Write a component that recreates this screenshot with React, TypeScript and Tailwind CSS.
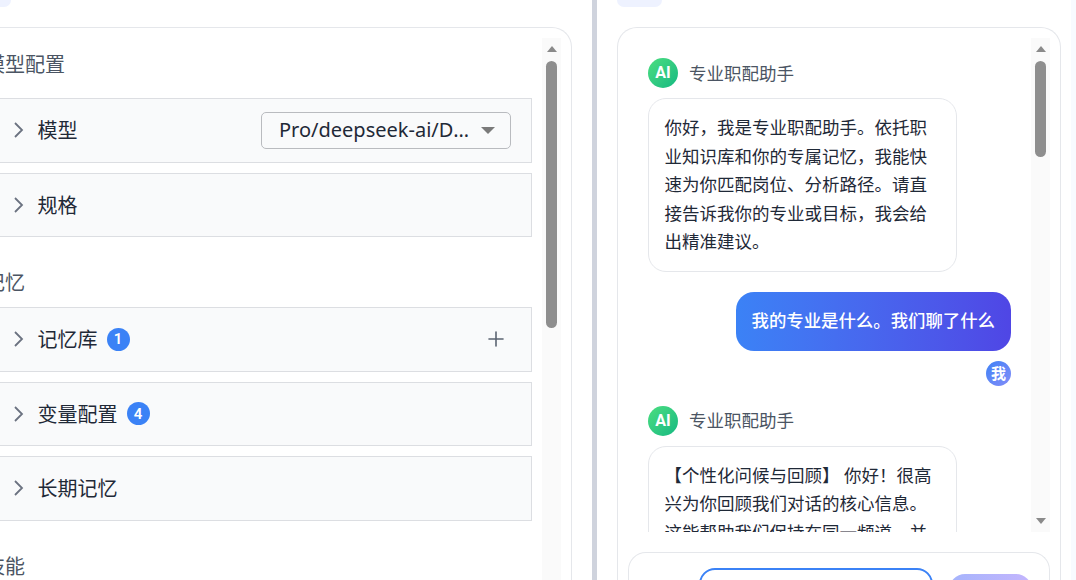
import { Plus } from 'lucide-react'

function Chevron() {
  return (
    <svg className="w-[10px] h-[16px] text-[#6b7280] shrink-0" viewBox="0 0 10 16" fill="none" stroke="currentColor" strokeWidth={1.8}>
      <path d="M1 1 L8 8 L1 15" />
    </svg>
  )
}

function Badge({ n }: { n: number }) {
  return (
    <span className="ml-[9px] w-[23px] h-[23px] rounded-full bg-[#3b82f6] text-white text-[15px] font-semibold font-['Roboto',sans-serif] flex items-center justify-center">
      {n}
    </span>
  )
}

function Row({ label, badge, children }: { label: string; badge?: number; children?: React.ReactNode }) {
  return (
    <div className="h-[64.5px] flex items-center pl-[28px] pr-[20px] bg-[#f9fafb] border border-[#dcdee2]">
      <Chevron />
      <span className="ml-[13.5px] pt-[2px] text-[20px] text-[#1f2937]">{label}</span>
      {badge ? <Badge n={badge} /> : null}
      <div className="ml-auto flex items-center">{children}</div>
    </div>
  )
}

function Scrollbar({ thumb, showDown }: { thumb: string; showDown?: boolean }) {
  return (
    <div className="w-[19px] shrink-0 bg-[#fafafa] flex flex-col items-center relative">
      <div className="mt-[8px] w-0 h-0 border-x-[5px] border-x-transparent border-b-[6px] border-b-[#8a8a8a]" />
      <div className={`mt-[9px] w-[11px] rounded-full bg-[#8e8e8e] ${thumb}`} />
      {showDown ? (
        <div className="absolute bottom-[8px] w-0 h-0 border-x-[5px] border-x-transparent border-t-[6px] border-t-[#8a8a8a]" />
      ) : null}
    </div>
  )
}

function AiHeader() {
  return (
    <div className="flex items-center gap-[11px]">
      <div className="w-[30px] h-[30px] rounded-full bg-gradient-to-br from-[#4ade80] to-[#10b981] text-white text-[16px] font-bold font-['Roboto',sans-serif] flex items-center justify-center">
        AI
      </div>
      <span className="text-[17.5px] text-[#4b5563]">专业职配助手</span>
    </div>
  )
}

function AiBubble({ text }: { text: string }) {
  return (
    <div className="mt-[10px] w-[309px] bg-white border border-[#e5e7eb] rounded-[18px] pl-[15.5px] pr-[14.5px] pt-[14px] pb-[15px] text-[17.5px] leading-[28.5px] text-[#1f2937]">
      {text}
    </div>
  )
}

export default function App() {
  return (
    <div className="w-[1076px] h-[580px] overflow-hidden flex bg-white font-['Noto_Sans','Noto_Sans_CJK_SC',sans-serif]">
      {/* Left: config */}
      <div className="-ml-[40px] w-[632px] shrink-0 pr-[20px] flex flex-col">
        <div className="ml-[20px] w-[31px] h-[7px] rounded-b-[8px] bg-[#eef2ff] shrink-0" />
        <div className="mt-[20px] flex-1 min-h-0 flex rounded-t-[20px] border border-b-0 border-[#e5e7eb] pt-[10px] pl-[24px] pr-[10px] overflow-hidden">
          <div className="flex-1 min-w-0 pr-[10px] flex flex-col">
            <div className="mt-[12px] text-[20px] leading-[30px] text-[#4b5563]">模型配置</div>
            <div className="mt-[18px] flex flex-col gap-[10px]">
              <Row label="模型">
                <div className="w-[250px] h-[37px] flex items-center pl-[17px] pr-[15px] gap-[10px] bg-[#f9fafb] border border-[#b9bbbf] rounded-[5px]">
                  <span className="flex-1 min-w-0 truncate text-[20px] text-[#1f2937]">Pro/deepseek-ai/DeepSeek-V3</span>
                  <span className="w-0 h-0 border-x-[7px] border-x-transparent border-t-[7px] border-t-[#7a7a7a]" />
                </div>
              </Row>
              <Row label="规格" />
            </div>

            <div className="mt-[31px] text-[20px] leading-[30px] text-[#4b5563]">记忆</div>
            <div className="mt-[9px] flex flex-col gap-[10px]">
              <Row label="记忆库" badge={1}>
                <Plus size={24} strokeWidth={1.6} className="mr-[3px] text-[#5b6472]" />
              </Row>
              <Row label="变量配置" badge={4} />
              <Row label="长期记忆" />
            </div>

            <div className="mt-[31px] text-[20px] leading-[30px] text-[#4b5563]">技能</div>
          </div>
          <Scrollbar thumb="h-[267px]" />
        </div>
      </div>

      <div className="w-[5px] shrink-0 bg-[#cfd3dd]" />

      {/* Right: chat */}
      <div className="w-[464px] shrink-0 pl-[20px] flex flex-col">
        <div className="w-[45px] h-[7px] rounded-b-[8px] bg-[#eef2ff] shrink-0" />
        <div className="mt-[20px] flex-1 min-h-0 rounded-t-[20px] border border-b-0 border-[#e5e7eb] pt-[10px] px-[10px] flex flex-col overflow-hidden">
          <div className="h-[494px] shrink-0 flex">
            <div className="flex-1 min-w-0 overflow-hidden px-[20px] pt-[20px]">
              <AiHeader />
              <AiBubble text="你好，我是专业职配助手。依托职业知识库和你的专属记忆，我能快速为你匹配岗位、分析路径。请直接告诉我你的专业或目标，我会给出精准建议。" />
              <div className="mt-[20px] flex justify-end">
                <div className="w-[275px] h-[59px] pl-[15.5px] pb-[2px] flex items-center rounded-[18px] bg-gradient-to-r from-[#3b82f6] to-[#4f46e5] text-white text-[17.4px] font-medium whitespace-nowrap">
                  我的专业是什么。我们聊了什么
                </div>
              </div>
              <div className="mt-[10px] flex justify-end">
                <div className="w-[25px] h-[25px] rounded-full bg-gradient-to-br from-[#3b82f6] to-[#818cf8] text-white text-[15px] font-bold flex items-center justify-center">
                  我
                </div>
              </div>
              <div className="mt-[20px]">
                <AiHeader />
                <AiBubble text="【个性化问候与回顾】 你好！很高兴为你回顾我们对话的核心信息。这能帮助我们保持在同一频道，并为后续的建议打好基础。" />
              </div>
            </div>
            <Scrollbar thumb="h-[96px]" showDown />
          </div>
          <div className="mt-[20px] flex-1 rounded-t-[18px] border border-b-0 border-[#e5e7eb] flex items-start pl-[70px] pr-[17px] pt-[15px] gap-[16px]">
            <div className="w-[235px] h-[40px] rounded-[16px] border-2 border-[#3b82f6] bg-white" />
            <div className="mt-[6px] w-[83px] h-[40px] rounded-[16px] bg-gradient-to-r from-[#a5b4fc] to-[#c4b5fd]" />
          </div>
        </div>
      </div>

      <div className="ml-[10px] flex-1 bg-[#f8faff]" />
    </div>
  )
}
